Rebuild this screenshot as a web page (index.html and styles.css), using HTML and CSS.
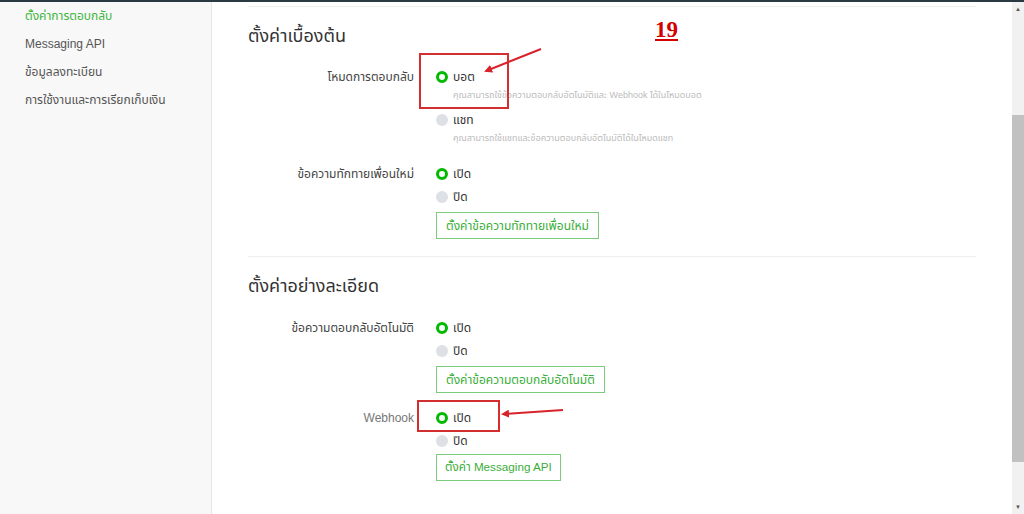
FILE: index.html
```html
<!DOCTYPE html>
<html lang="th">
<head>
    <meta charset="UTF-8">
    <meta name="viewport" content="width=device-width, initial-scale=1.0">
    <title>ตั้งค่าการตอบกลับ</title>
    <link rel="stylesheet" href="styles.css">
</head>
<body>
    <div class="layout">
        <nav class="sidebar">
            <a class="nav-item active">ตั้งค่าการตอบกลับ</a>
            <a class="nav-item">Messaging API</a>
            <a class="nav-item">ข้อมูลลงทะเบียน</a>
            <a class="nav-item">การใช้งานและการเรียกเก็บเงิน</a>
        </nav>

        <main class="main">
            <section class="section first">
                <h2>ตั้งค่าเบื้องต้น</h2>

                <div class="row">
                    <div class="row-label">โหมดการตอบกลับ</div>
                    <div class="options">
                        <div class="option"><span class="radio checked"></span>บอต</div>
                        <div class="hint">คุณสามารถใช้ข้อความตอบกลับอัตโนมัติและ Webhook ได้ในโหมดบอต</div>
                        <div class="option spaced"><span class="radio"></span>แชท</div>
                        <div class="hint">คุณสามารถใช้แชทและข้อความตอบกลับอัตโนมัติได้ในโหมดแชท</div>
                    </div>
                </div>

                <div class="row">
                    <div class="row-label">ข้อความทักทายเพื่อนใหม่</div>
                    <div class="options">
                        <div class="option"><span class="radio checked"></span>เปิด</div>
                        <div class="option"><span class="radio"></span>ปิด</div>
                        <button class="btn">ตั้งค่าข้อความทักทายเพื่อนใหม่</button>
                    </div>
                </div>
            </section>

            <section class="section">
                <h2>ตั้งค่าอย่างละเอียด</h2>

                <div class="row">
                    <div class="row-label">ข้อความตอบกลับอัตโนมัติ</div>
                    <div class="options">
                        <div class="option"><span class="radio checked"></span>เปิด</div>
                        <div class="option"><span class="radio"></span>ปิด</div>
                        <button class="btn">ตั้งค่าข้อความตอบกลับอัตโนมัติ</button>
                    </div>
                </div>

                <div class="row tight">
                    <div class="row-label light">Webhook</div>
                    <div class="options">
                        <div class="option"><span class="radio checked"></span>เปิด</div>
                        <div class="option"><span class="radio"></span>ปิด</div>
                        <button class="btn narrow">ตั้งค่า Messaging API</button>
                    </div>
                </div>
            </section>
        </main>

        <div class="scrollbar">
            <div class="scroll-arrow">&#9650;</div>
            <div class="scroll-thumb"></div>
            <div class="scroll-space"></div>
            <div class="scroll-arrow">&#9660;</div>
        </div>
    </div>

    <!-- annotation drawn over the screenshot -->
    <div class="step-no">19</div>
    <svg class="marks" width="1024" height="514" viewBox="0 0 1024 514">
        <defs>
            <marker id="head" markerWidth="8" markerHeight="8" refX="6" refY="4" orient="auto" markerUnits="userSpaceOnUse">
                <path d="M0,0 L8,4 L0,8 z" fill="#d9232a"/>
            </marker>
        </defs>
        <rect x="420" y="54" width="88" height="54" fill="none" stroke="#d32f2f" stroke-width="2"/>
        <rect x="418" y="401" width="81" height="30" fill="none" stroke="#d32f2f" stroke-width="2"/>
        <line x1="541" y1="49" x2="486" y2="71" stroke="#d9232a" stroke-width="2" marker-end="url(#head)"/>
        <line x1="563" y1="410" x2="503" y2="414" stroke="#d9232a" stroke-width="2" marker-end="url(#head)"/>
    </svg>
</body>
</html>
```

FILE: styles.css
```css
html, body { margin: 0; height: 100%; overflow: hidden; }
body { font-family: "Liberation Sans", "Noto Sans Thai", Tahoma, sans-serif; background: #fff; color: #333; border-top: 2px solid #2b3a42; box-sizing: border-box; }
.layout { display: flex; height: 512px; }

.sidebar { width: 212px; flex: none; background: #f8f8f8; border-right: 1px solid #e6e6e6; box-sizing: border-box; display: flex; flex-direction: column; }
.nav-item { padding-left: 25px; line-height: 28px; font-size: 12px; color: #555; }
.nav-item.active { color: #3fb53f; }

.main { flex: 1; padding: 0 36px; }
.section { border-top: 1px solid #eee; padding: 17px 0 17px; }
.section.first { margin-top: 4px; }
h2 { margin: 0 0 20px; font-size: 18px; line-height: 24px; font-weight: normal; color: #333; }
.section.first h2 { margin-bottom: 19px; }

.row { display: flex; gap: 22px; }
.row + .row { margin-top: 17px; }
.section.first .row + .row { margin-top: 18px; }
.row + .row.tight { margin-top: 15px; }
.row-label { width: 166px; flex: none; text-align: right; font-size: 12px; line-height: 20px; color: #444; }
.row-label.light { color: #777; }

.options { display: flex; flex-direction: column; align-items: flex-start; }
.option { display: flex; align-items: center; gap: 5px; font-size: 12px; line-height: 20px; color: #333; }
.option + .option { margin-top: 3px; }
.option.spaced { margin-top: 7px; }
.hint { padding-left: 17px; font-size: 9px; line-height: 16px; color: #bbb; white-space: nowrap; }

.radio { width: 12px; height: 12px; border-radius: 50%; background: #dde0e4; box-sizing: border-box; }
.radio.checked { background: #fff; border: 3.5px solid #00b900; }

.btn { margin-top: 5px; height: 27px; padding: 0 9px; font-family: inherit; font-size: 12px; color: #3aae3a; background: #fff; border: 1px solid #7cca7c; border-radius: 0; cursor: pointer; }
.btn.narrow { margin-top: 3px; padding: 0 8px; font-size: 11.7px; }

.scrollbar { width: 12px; flex: none; background: #f1f1f1; display: flex; flex-direction: column; }
.scroll-arrow { height: 14px; font-size: 6px; line-height: 14px; text-align: center; color: #555; }
.scroll-thumb { margin-top: 99px; height: 347px; background: #c1c1c1; }
.scroll-space { flex: 1; }

.step-no { position: absolute; left: 655px; top: 17px; font-family: "Liberation Serif", serif; font-weight: bold; font-size: 23px; color: #d40000; text-decoration: underline; }
.marks { position: absolute; left: 0; top: 0; pointer-events: none; }
```
